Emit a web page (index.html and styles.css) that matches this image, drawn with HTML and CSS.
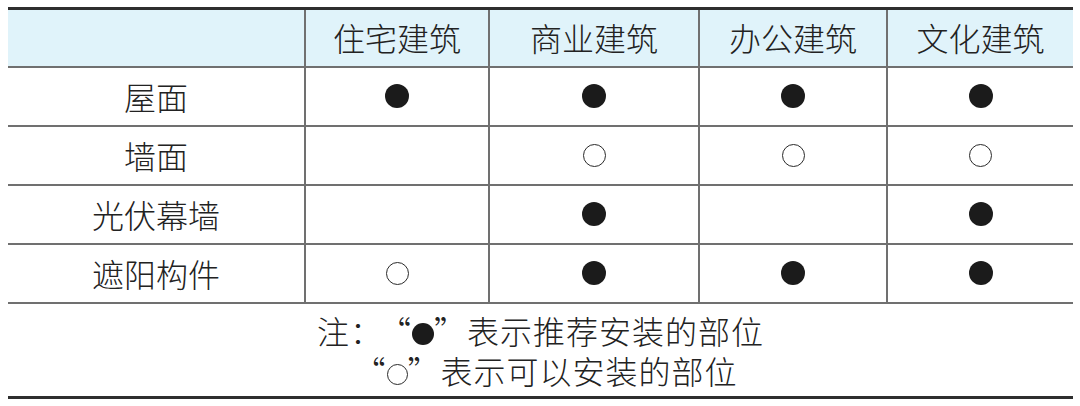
FILE: index.html
```html
<!DOCTYPE html>
<html lang="zh">
<head>
<meta charset="utf-8">
<link rel="stylesheet" href="styles.css">
</head>
<body>
<div class="page">
  <div class="sheet">
    <div class="grid">
      <div class="cell head first"></div>
      <div class="cell head">住宅建筑</div>
      <div class="cell head">商业建筑</div>
      <div class="cell head">办公建筑</div>
      <div class="cell head">文化建筑</div>

      <div class="cell first">屋面</div>
      <div class="cell"><span class="dot"></span></div>
      <div class="cell"><span class="dot"></span></div>
      <div class="cell"><span class="dot"></span></div>
      <div class="cell"><span class="dot"></span></div>

      <div class="cell first">墙面</div>
      <div class="cell"></div>
      <div class="cell"><span class="ring"></span></div>
      <div class="cell"><span class="ring"></span></div>
      <div class="cell"><span class="ring"></span></div>

      <div class="cell first">光伏幕墙</div>
      <div class="cell"></div>
      <div class="cell"><span class="dot"></span></div>
      <div class="cell"></div>
      <div class="cell"><span class="dot"></span></div>

      <div class="cell first">遮阳构件</div>
      <div class="cell"><span class="ring"></span></div>
      <div class="cell"><span class="dot"></span></div>
      <div class="cell"><span class="dot"></span></div>
      <div class="cell"><span class="dot"></span></div>
    </div>
    <div class="note">
      <div class="line"><span class="lead">注：</span>“<span class="dot small"></span>”表示推荐安装的部位</div>
      <div class="line second">“<span class="ring small"></span>”表示可以安装的部位</div>
    </div>
  </div>
</div>
</body>
</html>
```

FILE: styles.css
```css
html, body {
  margin: 0;
  padding: 0;
  background: #ffffff;
}

.page {
  padding: 7px 0 0 8px;
  font-family: "Noto Sans CJK SC", "Noto Sans", sans-serif;
  font-weight: 300;
  color: #222222;
}

.sheet {
  width: 1065px;
  border-top: 3px solid #2e2e2e;
  border-bottom: 3px solid #2e2e2e;
}

.grid {
  display: grid;
  grid-template-columns: 296px 184px 210px 188px 187px;
  grid-template-rows: 58px repeat(4, 59px);
}

.cell {
  box-sizing: border-box;
  border-bottom: 2px solid #707070;
  border-left: 2px solid #707070;
  display: flex;
  align-items: center;
  justify-content: center;
  font-size: 32px;
  line-height: 1;
  padding-bottom: 1px;
}

.cell.head {
  padding-bottom: 3px;
  background: #e0f3fa;
}

.cell.first {
  border-left: none;
}

.dot {
  display: inline-block;
  width: 24px;
  height: 24px;
  border-radius: 50%;
  background: #1b1b1b;
}

.ring {
  display: inline-block;
  box-sizing: border-box;
  width: 23px;
  height: 23px;
  border-radius: 50%;
  border: 1.5px solid #2a2a2a;
}

.note {
  padding: 6px 0 6px;
  text-align: center;
  font-size: 32px;
  letter-spacing: 1px;
}

.line {
  height: 40px;
  line-height: 40px;
}

.lead {
  margin-right: 12px;
}

.line.second {
  padding-left: 10px;
}

.dot.small {
  width: 22px;
  height: 22px;
  vertical-align: -1px;
}

.ring.small {
  width: 21px;
  height: 21px;
  vertical-align: -1px;
}
```
